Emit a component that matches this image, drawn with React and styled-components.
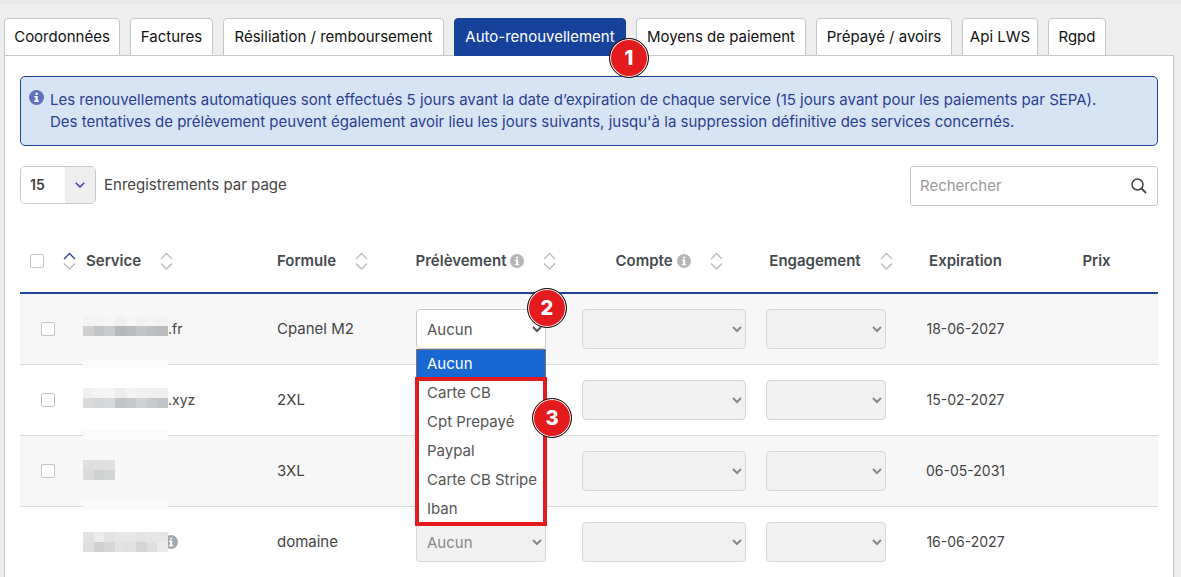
import React from 'react'
import styled, { createGlobalStyle } from 'styled-components'

const GlobalStyle = createGlobalStyle`
  * {
    box-sizing: border-box;
  }
  body {
    margin: 0;
    background: #eeeeef;
    color: #444;
    font-family: Inter, 'Open Sans', sans-serif;
    font-size: 15px;
    line-height: 22px;
  }
`

const tabs = [
  { label: 'Coordonnées', width: 116 },
  { label: 'Factures', width: 83 },
  { label: 'Résiliation / remboursement', width: 221 },
  { label: 'Auto-renouvellement', width: 172, active: true, step: 1 },
  { label: 'Moyens de paiement', width: 170 },
  { label: 'Prépayé / avoirs', width: 136 },
  { label: 'Api LWS', width: 76 },
  { label: 'Rgpd', width: 58 },
]

const options = ['Carte CB', 'Cpt Prepayé', 'Paypal', 'Carte CB Stripe', 'Iban']

// top and blocks are the two lines of grey squares over the service name
const rows = [
  {
    id: 1,
    suffix: '.fr',
    plan: 'Cpanel M2',
    date: '18-06-2027',
    open: true,
    top: ['#f3f3f3', '#f3f3f3', '#f5f5f5', '#f1f1f1', '#f5f5f5', '#f2f2f2', '#f3f3f3', '#f2f2f2'],
    blocks: ['#cfd0d1', '#c2c4c5', '#c8cacb', '#b6b9bb', '#b9bbbd', '#c3c5c7', '#bdbfc1', '#babcbe'],
    blockTop: 17,
  },
  {
    id: 2,
    suffix: '.xyz',
    plan: '2XL',
    date: '15-02-2027',
    top: ['#f0f0f0', '#f4f4f4', '#f4f4f4', '#ededed', '#f3f3f3', '#f0f0f0', '#f0f0f0', '#f0f0f0'],
    blocks: ['#d9dadb', '#d5d6d7', '#d8d9da', '#c1c3c5', '#c5c7c9', '#d0d1d2', '#c8cacb', '#c3c5c7'],
    blockTop: 18,
  },
  {
    id: 3,
    suffix: '',
    plan: '3XL',
    date: '06-05-2031',
    top: ['#dedede', '#dedfdf', '#e0e0e0'],
    blocks: ['#dadada', '#cfd0d0', '#d3d4d4'],
    blockTop: 19,
  },
  {
    id: 4,
    suffix: '',
    plan: 'domaine',
    date: '16-06-2027',
    info: true,
    top: ['#e2e2e2', '#ececec', '#e3e3e3', '#e6e6e6', '#e6e6e6', '#e4e4e4', '#e6e6e6', '#e5e5e5'],
    blocks: ['#dedede', '#cecfcf', '#d6d6d6', '#e3e3e3', '#e1e1e1', '#d5d5d5', '#dfdfdf', '#ebebeb'],
    blockTop: 20,
  },
]

const InfoIcon = ({ color, size = 14 }) => (
  <svg width={size} height={size} viewBox='0 0 16 16' aria-hidden='true'>
    <circle cx='8' cy='8' r='8' fill={color} />
    <path
      d='M7 3h2.3v2.2H7zM5.8 6.4h3.5v4.9h1.2v1.5H5.6v-1.5h1.3V7.9H5.8z'
      fill='#fff'
    />
  </svg>
)

const SortIcon = ({ up }) => (
  <svg width='13' height='18' viewBox='0 0 13 18' fill='none' strokeWidth='1.3'>
    <path d='M1 7l5.500-5.500L12 7' stroke={up ? '#2b3a9b' : '#b9b9b9'} />
    <path d='M1 11.500l5.500 5.500 5.500-5.500' stroke='#b9b9b9' />
  </svg>
)

const Mosaic = ({ top, blocks, blockTop, last }) => (
  <MosaicSvg width='85' height='40' shapeRendering='crispEdges' aria-hidden='true'>
    {!last && <rect x='0' y='50' width='85' height='9' fill='#fafafa' />}
    {top.map((fill, i) => (
      <rect key={i} x={i * 10.625} y={blockTop - 10} width='10.7' height='10' fill={fill} />
    ))}
    {blocks.map((fill, i) => (
      <rect key={i} x={i * 10.625} y={blockTop} width='10.7' height='10' fill={fill} />
    ))}
  </MosaicSvg>
)

const HeadCell = ({ label, info, align }) => (
  <Th scope='col'>
    <HeadContent $align={align}>
      <HeadLabel>
        {label}
        {info && <InfoIcon color='#b5b5b5' />}
      </HeadLabel>
      <SortIcon />
    </HeadContent>
  </Th>
)

const App = () => {
  return (
    <>
      <GlobalStyle />
      <Page>
        <Tabs>
          {tabs.map((tab) => (
            <Tab key={tab.label} type='button' $width={tab.width} $active={tab.active}>
              {tab.label}
              {tab.step && <TabStep>{tab.step}</TabStep>}
            </Tab>
          ))}
        </Tabs>
        <Panel>
          <Alert>
            <InfoIcon color='#5f72ba' size={15} />
            <AlertText>
              Les renouvellements automatiques sont effectués 5 jours avant la date d’expiration de
              chaque service (15 jours avant pour les paiements par SEPA).
              <br />
              Des tentatives de prélèvement peuvent également avoir lieu les jours suivants, jusqu'à
              la suppression définitive des services concernés.
            </AlertText>
          </Alert>

          <Toolbar>
            <LengthLabel>
              <LengthBox>
                <LengthSelect defaultValue='15'>
                  <option>15</option>
                  <option>50</option>
                </LengthSelect>
                <LengthArrow>
                  <svg width='10' height='6' viewBox='0 0 10 6' fill='none'>
                    <path d='M.7 .7L5 5 9.300 .7' stroke='#3a3fb0' strokeWidth='1.5' />
                  </svg>
                </LengthArrow>
              </LengthBox>
              Enregistrements par page
            </LengthLabel>
            <SearchBox>
              <SearchInput type='search' placeholder='Rechercher' aria-label='Rechercher' />
              <svg width='16' height='16' viewBox='0 0 16 16' fill='none' stroke='#444'>
                <circle cx='6.500' cy='6.500' r='5.500' strokeWidth='1.5' />
                <path d='M10.500 10.500l4.500 4.500' strokeWidth='1.8' />
              </svg>
            </SearchBox>
          </Toolbar>

          <Table>
            <colgroup>
              <Col $width={56} />
              <Col $width={191} />
              <Col $width={123} />
              <Col $width={182} />
              <Col $width={184} />
              <Col $width={140} />
              <Col $width={139} />
              <Col />
            </colgroup>
            <thead>
              <tr>
                <Th scope='col'>
                  <CheckHead>
                    <Checkbox type='checkbox' aria-label='Tout sélectionner' />
                    <SortIcon up />
                  </CheckHead>
                </Th>
                <HeadCell label='Service' />
                <HeadCell label='Formule' />
                <HeadCell label='Prélèvement' info align='center' />
                <HeadCell label='Compte' info align='center' />
                <HeadCell label='Engagement' align='center' />
                <Th scope='col'>Expiration</Th>
                <Th scope='col'>Prix</Th>
              </tr>
            </thead>
            <tbody>
              {rows.map((row) => (
                <Row key={row.id}>
                  <CheckCell>
                    {!row.info && <Checkbox type='checkbox' aria-label={row.plan} />}
                  </CheckCell>
                  <ServiceCell>
                    <Service>
                      <Mosaic
                        top={row.top}
                        blocks={row.blocks}
                        blockTop={row.blockTop}
                        last={row.info}
                      />
                      {row.suffix}
                      {row.info && (
                        <ServiceInfo>
                          <InfoIcon color='#a3a8ac' />
                        </ServiceInfo>
                      )}
                    </Service>
                  </ServiceCell>
                  <Td>{row.plan}</Td>
                  <Td $center>
                    <Dropdown>
                      <Select $width={130} disabled={!row.open} aria-label='Prélèvement'>
                        <option>Aucun</option>
                        {options.map((option) => (
                          <option key={option}>{option}</option>
                        ))}
                      </Select>
                      {row.open && (
                        <>
                          <Menu>
                            <Option $selected>Aucun</Option>
                            <Framed>
                              {options.map((option) => (
                                <Option key={option}>{option}</Option>
                              ))}
                              <MenuStep>3</MenuStep>
                            </Framed>
                          </Menu>
                          <SelectStep>2</SelectStep>
                        </>
                      )}
                    </Dropdown>
                  </Td>
                  <Td $center>
                    <Select $width={164} disabled aria-label='Compte' />
                  </Td>
                  <Td $center>
                    <Select $width={120} disabled aria-label='Engagement' />
                  </Td>
                  <DateCell $center>{row.date}</DateCell>
                  <Td />
                </Row>
              ))}
            </tbody>
          </Table>
        </Panel>
      </Page>
    </>
  )
}

export default App

const Page = styled.div`
  border-top: 4px solid #e7e7e7;
  padding: 14px 7px 0 4px;
`

const Tabs = styled.nav`
  display: flex;
  gap: 10px;
`

const Tab = styled.button`
  position: relative;
  width: ${(props) => props.$width}px;
  height: 38px;
  margin-bottom: -1px;
  padding: 0;
  border: 1px solid ${(props) => (props.$active ? '#17429b' : '#c3c8cc')};
  border-radius: 4px 4px 0 0;
  background: ${(props) => (props.$active ? '#17429b' : '#fff')};
  color: ${(props) => (props.$active ? '#fff' : '#111')};
  font: inherit;
  white-space: nowrap;
  z-index: ${(props) => (props.$active ? 1 : 0)};
`

const Step = styled.span`
  position: absolute;
  z-index: 2;
  display: flex;
  align-items: center;
  justify-content: center;
  width: 40px;
  height: 40px;
  border: 1px solid #111;
  border-radius: 50%;
  background: #e31b1f;
  box-shadow: inset 0 0 0 1px #fff;
  color: #fff;
  font-size: 20px;
  font-weight: 800;
`

const TabStep = styled(Step)`
  right: -24px;
  bottom: -23px;
`

const SelectStep = styled(Step)`
  top: -21px;
  right: -21px;
`

const MenuStep = styled(Step)`
  top: 19px;
  right: -27px;
`

const Panel = styled.main`
  min-height: calc(100vh - 55px);
  padding: 20px 15px 0;
  border: 1px solid #c3c8cc;
  border-bottom: 0;
  background: #fff;
`

const Alert = styled.div`
  display: flex;
  gap: 6px;
  padding: 12px 8px;
  border: 1px solid #1c459b;
  border-radius: 5px;
  background: #d6e4f4;
  color: #2c3e93;
  svg {
    flex: none;
    margin-top: 1px;
  }
`

const AlertText = styled.p`
  margin: 0;
`

const Toolbar = styled.div`
  display: flex;
  justify-content: space-between;
  align-items: flex-start;
  margin-top: 20px;
`

const LengthLabel = styled.label`
  display: flex;
  align-items: center;
  gap: 8px;
`

const LengthBox = styled.span`
  display: grid;
  width: 76px;
  height: 38px;
  border: 1px solid #c8c8c8;
  border-radius: 5px;
  overflow: hidden;
`

const LengthSelect = styled.select`
  grid-area: 1 / 1;
  appearance: none;
  padding: 0 9px;
  border: 0;
  background: #fff;
  color: #444;
  font: inherit;
  font-size: 14px;
  font-weight: 600;
`

const LengthArrow = styled.span`
  grid-area: 1 / 1;
  justify-self: end;
  display: flex;
  align-items: center;
  justify-content: center;
  width: 30px;
  background: #eee;
  pointer-events: none;
`

const SearchBox = styled.div`
  display: flex;
  align-items: center;
  width: 248px;
  height: 40px;
  padding: 0 10px 0 9px;
  border: 1px solid #c8c8c8;
  border-radius: 3px;
`

const SearchInput = styled.input`
  flex: 1;
  min-width: 0;
  padding: 0;
  border: 0;
  background: none;
  font: inherit;
  &::placeholder {
    color: #999;
  }
`

const Table = styled.table`
  width: 100%;
  margin-top: 24px;
  table-layout: fixed;
  border-collapse: separate;
  border-spacing: 0;
`

const Col = styled.col`
  width: ${(props) => (props.$width ? `${props.$width}px` : 'auto')};
`

const Th = styled.th`
  height: 64px;
  padding: 0 0 0 10px;
  border-bottom: 2px solid #1f4796;
  color: #444a4e;
  font-weight: 600;
  white-space: nowrap;
  &:nth-child(n + 7) {
    padding: 0;
  }
`

const HeadContent = styled.span`
  display: flex;
  align-items: center;
  justify-content: ${(props) => props.$align || 'flex-start'};
  gap: 19px;
`

const HeadLabel = styled.span`
  display: flex;
  align-items: center;
  gap: 4px;
`

const CheckHead = styled.span`
  display: flex;
  align-items: center;
  justify-content: space-between;
`

const Checkbox = styled.input`
  appearance: none;
  display: block;
  width: 14px;
  height: 14px;
  margin: 0;
  border: 1px solid #c0c7cd;
  border-radius: 2px;
  background: #fff;
`

const Row = styled.tr`
  &:nth-child(odd) {
    background: #f7f7f7;
  }
`

const Td = styled.td`
  height: 71px;
  padding: 0 10px;
  border-bottom: 1px solid #dadada;
  text-align: ${(props) => (props.$center ? 'center' : 'left')};
`

const CheckCell = styled(Td)`
  padding: 0 0 0 21px;
`

const ServiceCell = styled(Td)`
  padding: 0 0 0 7px;
  font-size: 14px;
`

const DateCell = styled(Td)`
  font-size: 14px;
`

const Service = styled.span`
  display: flex;
  align-items: center;
`

const ServiceInfo = styled.span`
  display: flex;
  margin-left: -4px;
`

const MosaicSvg = styled.svg`
  flex: none;
  z-index: 1;
  overflow: visible;
`

const Dropdown = styled.div`
  position: relative;
  z-index: 2;
  width: 130px;
  margin: 0 auto;
  &:has(:disabled) {
    z-index: 0;
  }
`

const Select = styled.select`
  display: block;
  width: ${(props) => props.$width}px;
  height: 40px;
  margin: 0 auto;
  padding: 0 0 0 6px;
  border: 1px solid #c9c9c9;
  border-radius: 4px;
  background-color: #fff;
  color: #555;
  font: inherit;
  &:disabled {
    border-color: #d6d6d6;
    background-color: #f1f1f1;
    color: #888;
    opacity: 1;
  }
`

const Menu = styled.div`
  position: absolute;
  z-index: 1;
  top: 100%;
  left: 0;
  width: 100%;
  border: 1px solid #777;
  background: #fff;
  text-align: left;
`

const Option = styled.div`
  height: 29px;
  padding: 3px 10px;
  background: ${(props) => (props.$selected ? '#1967d2' : '#fff')};
  color: ${(props) => (props.$selected ? '#fff' : '#555')};
  white-space: nowrap;
`

const Framed = styled.div`
  position: relative;
  outline: 4px solid #e31b1f;
  outline-offset: -2px;
`
